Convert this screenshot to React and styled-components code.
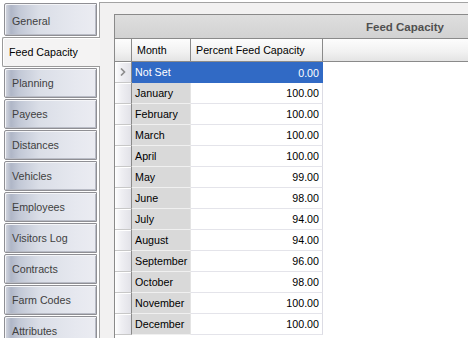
import React from "react";
import styled, { createGlobalStyle, css } from "styled-components";

const Global = createGlobalStyle`
  html, body { margin: 0; padding: 0; background: #ffffff; }
  body { font-family: "Liberation Sans", Arial, sans-serif; font-size: 10.7px; color: #000; }
  * { box-sizing: border-box; }
`;

const Screen = styled.div`
  display: flex;
  width: 468px;
  height: 338px;
  overflow: hidden;
  background: #ffffff;
`;

const TabStrip = styled.div`
  width: 99px;
  flex: none;
  display: flex;
  flex-direction: column;
  gap: 1px;
  padding-top: 3px;
  position: relative;
  z-index: 2;
`;

const Tab = styled.div`
  flex: none;
  height: ${(p) => p.$h || 30}px;
  margin-left: 4px;
  margin-right: 2px;
  display: flex;
  align-items: center;
  padding-left: 7px;
  padding-top: ${(p) => (p.$h ? 2 : 0)}px;
  color: #404040;
  border: 1px solid #8f8f94;
  border-radius: 2px 0 0 2px;
  box-shadow: inset 1px 1px 0 #f4f5f8, inset -1px -1px 0 #b9bcc6;
  background: linear-gradient(
    to right,
    #d6d9e1 0px,
    #afb6c7 6px,
    #c2c8d6 14px,
    #dadee7 34px,
    #e6e8ef 70px,
    #ebecf2 100%
  );
  white-space: nowrap;
  ${(p) =>
    p.$active &&
    css`
      margin-left: 2px;
      margin-right: -1px;
      padding-left: 6px;
      color: #000;
      background: #f4f3f3;
      border-right: none;
      border-color: #9a9a9a;
      box-shadow: inset 1px 1px 0 #ffffff;
    `}
`;

const Panel = styled.div`
  flex: 1;
  margin-top: 2px;
  background: #f2f1f1;
  border-top: 1px solid #a3a3a3;
  border-left: 1px solid #a3a3a3;
  padding: 11px 0 0 14px;
  display: flex;
  flex-direction: column;
  min-width: 0;
`;

const Grid = styled.div`
  flex: 1;
  background: #ffffff;
  border-top: 1px solid #8a8a8a;
  border-left: 1px solid #8a8a8a;
  display: flex;
  flex-direction: column;
  min-width: 0;
`;

const Caption = styled.div`
  height: 24px;
  flex: none;
  display: flex;
  align-items: center;
  justify-content: flex-end;
  padding-right: 24px;
  font-weight: bold;
  font-size: 11.5px;
  color: #505050;
  background: linear-gradient(to bottom, #dedede, #d2d2d2);
  border-bottom: 1px solid #8a8a8a;
`;

const HeaderRow = styled.div`
  height: 23px;
  flex: none;
  display: flex;
  background: linear-gradient(to bottom, #fdfdfd 0%, #f1f1f1 60%, #e4e4e4 100%);
  border-bottom: 1px solid #8a8a8a;
`;

const HeaderCell = styled.div`
  width: ${(p) => p.$w}px;
  flex: none;
  display: flex;
  align-items: center;
  padding-left: 5px;
  border-right: 1px solid #8a8a8a;
  color: #000;
  white-space: nowrap;
`;

const HeaderFill = styled.div`
  flex: 1;
`;

const Row = styled.div`
  height: 21px;
  flex: none;
  display: flex;
`;

const RowHeader = styled.div`
  width: 17px;
  flex: none;
  display: flex;
  align-items: center;
  justify-content: center;
  border-right: 1px solid #8a8a8a;
  border-bottom: 1px solid #c8c8c8;
  background: linear-gradient(to right, #ffffff 0%, #efeff3 40%, #e2e2e8 100%);
  box-shadow: inset 1px 1px 0 #ffffff;
`;

const MonthCell = styled.div`
  width: 59px;
  flex: none;
  display: flex;
  align-items: center;
  padding-left: 3px;
  background: ${(p) => (p.$sel ? "#316ac5" : "#d9d9d9")};
  color: ${(p) => (p.$sel ? "#ffffff" : "#000")};
  border-bottom: 1px solid ${(p) => (p.$sel ? "#316ac5" : "#f0f0f0")};
  border-right: 1px solid ${(p) => (p.$sel ? "#316ac5" : "#e4e4e4")};
  white-space: nowrap;
  overflow: hidden;
`;

const ValueCell = styled.div`
  width: 132px;
  flex: none;
  display: flex;
  align-items: center;
  justify-content: flex-end;
  padding-right: 3px;
  border-right: 1px solid #dcdce4;
  border-bottom: 1px solid #e4e4ea;
  ${(p) =>
    p.$sel &&
    css`
      background: #316ac5;
      color: #ffffff;
      border: 1px dotted #ffffff;
      outline: 1px solid #316ac5;
      outline-offset: -1px;
    `}
`;

const Chevron = () => (
  <svg width="6" height="8" viewBox="0 0 6 8">
    <path d="M1 0.5 L4.5 4 L1 7.5" fill="none" stroke="#8c8c8c" strokeWidth="1.6" />
  </svg>
);

const tabs = [
  "General",
  "Feed Capacity",
  "Planning",
  "Payees",
  "Distances",
  "Vehicles",
  "Employees",
  "Visitors Log",
  "Contracts",
  "Farm Codes",
  "Attributes",
];

const rows = [
  ["Not Set", "0.00"],
  ["January", "100.00"],
  ["February", "100.00"],
  ["March", "100.00"],
  ["April", "100.00"],
  ["May", "99.00"],
  ["June", "98.00"],
  ["July", "94.00"],
  ["August", "94.00"],
  ["September", "96.00"],
  ["October", "98.00"],
  ["November", "100.00"],
  ["December", "100.00"],
];

export default function App() {
  return (
    <>
      <Global />
      <Screen>
        <TabStrip>
          {tabs.map((t, i) => (
            <Tab key={t} $active={i === 1} $h={i === 0 ? 33 : undefined}>
              {t}
            </Tab>
          ))}
        </TabStrip>
        <Panel>
          <Grid>
            <Caption>Feed Capacity</Caption>
            <HeaderRow>
              <HeaderCell $w={17} />
              <HeaderCell $w={59}>Month</HeaderCell>
              <HeaderCell $w={132}>Percent Feed Capacity</HeaderCell>
              <HeaderFill />
            </HeaderRow>
            {rows.map(([m, v], i) => (
              <Row key={m}>
                <RowHeader>{i === 0 && <Chevron />}</RowHeader>
                <MonthCell $sel={i === 0}>{m}</MonthCell>
                <ValueCell $sel={i === 0}>{v}</ValueCell>
              </Row>
            ))}
          </Grid>
        </Panel>
      </Screen>
    </>
  );
}
